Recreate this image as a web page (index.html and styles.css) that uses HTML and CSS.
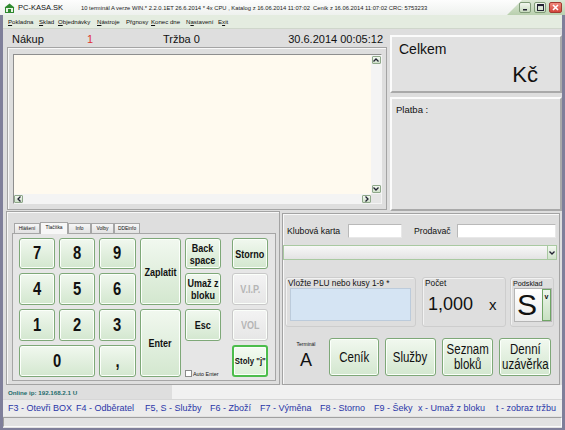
FILE: index.html
```html
<!DOCTYPE html>
<html lang="cs">
<head>
<meta charset="utf-8">
<title>PC-KASA.SK</title>
<link rel="stylesheet" href="styles.css">
</head>
<body>
<div class="window">
  <div class="titlebar">
    <svg class="appicon" width="11" height="10" viewBox="0 0 11 10"><path d="M0.5 4.5 L5.5 0.5 L10.5 4.5 Z" fill="#2f8a2f"/><rect x="1.5" y="4.5" width="8" height="5" fill="#e8f4e4" stroke="#2f8a2f"/><rect x="4" y="6" width="3" height="3.5" fill="#2f8a2f"/></svg>
    <span class="apptitle">PC-KASA.SK</span>
    <span class="titleinfo">10 terminál A verze WIN.* 2.2.0.1ET 26.6.2014 * 4x CPU , Katalog z 16.06.2014 11:07:02&nbsp; Ceník z 16.06.2014 11:07:02 CRC: 5753233</span>
    <div class="tcaps">
      <span class="tcap"><svg width="6" height="6" viewBox="0 0 6 6"><rect x="1" y="4" width="4" height="1.5" fill="#223"/></svg></span>
      <span class="tcap"><svg width="7" height="7" viewBox="0 0 7 7"><rect x="0.5" y="0.5" width="6" height="6" fill="none" stroke="#223"/><rect x="0.5" y="0.5" width="6" height="1.6" fill="#223"/></svg></span>
      <span class="tcap close"><svg width="7" height="7" viewBox="0 0 7 7"><path d="M1 1 L6 6 M6 1 L1 6" stroke="#fff" stroke-width="1.6"/></svg></span>
    </div>
  </div>
  <div class="client">
    <div class="menubar">
      <span class="mi w1"><u>P</u>okladna</span>
      <span class="mi w2"><u>S</u>klad</span>
      <span class="mi w3"><u>O</u>bjednávky</span>
      <span class="mi w4"><u>N</u>ástroje</span>
      <span class="mi w5">Přgnosy</span>
      <span class="mi w6"><u>K</u>onec dne</span>
      <span class="mi w7">N<u>a</u>stavení</span>
      <span class="mi w8">E<u>x</u>it</span>
    </div>

    <div class="top">
      <div class="lefttop">
        <div class="infoline">
          <span class="c1">Nákup</span>
          <span class="c2">1</span>
          <span class="c3">Tržba 0</span>
          <span class="c4">30.6.2014 00:05:12</span>
        </div>
        <div class="listbox">
          <div class="listinner">
            <div class="listrow">
              <div class="listarea"></div>
              <div class="vscroll">
                <span class="sbtn"><svg width="6" height="4" viewBox="0 0 6 4"><path d="M0.5 3.5 L3 1 L5.5 3.5" fill="none" stroke="#223" stroke-width="1.3"/></svg></span>
                <span class="vtrack"></span>
                <span class="sbtn"><svg width="6" height="4" viewBox="0 0 6 4"><path d="M0.5 0.5 L3 3 L5.5 0.5" fill="none" stroke="#223" stroke-width="1.3"/></svg></span>
              </div>
            </div>
            <div class="hscroll">
              <span class="sbtn"><svg width="4" height="6" viewBox="0 0 4 6"><path d="M3.5 0.5 L1 3 L3.5 5.5" fill="none" stroke="#223" stroke-width="1.3"/></svg></span>
              <span class="htrack"></span>
              <span class="sbtn"><svg width="4" height="6" viewBox="0 0 4 6"><path d="M0.5 0.5 L3 3 L0.5 5.5" fill="none" stroke="#223" stroke-width="1.3"/></svg></span>
              <span class="corner"></span>
            </div>
          </div>
        </div>
      </div>
      <div class="righttop">
        <div class="celkem">
          <div class="celkem-lbl">Celkem</div>
          <div class="celkem-val">Kč</div>
        </div>
        <div class="platba">Platba :</div>
      </div>
    </div>

    <div class="bottom">
      <div class="keypanel">
        <div class="tabs">
          <span class="tab t1">Hlášení</span>
          <span class="tab t2 active">Tlačítka</span>
          <span class="tab t3">Info</span>
          <span class="tab t4">Volby</span>
          <span class="tab t5">DDEinfo</span>
        </div>
        <div class="tabpane">
          <div class="keys">
            <div class="btn dg"><span class="nar">7</span></div>
            <div class="btn dg"><span class="nar">8</span></div>
            <div class="btn dg"><span class="nar">9</span></div>
            <div class="btn lb tall"><span class="nar">Zaplatit</span></div>
            <div class="btn lb"><span class="nar">Back<br>space</span></div>
            <div class="btn lb side"><span class="nar">Storno</span></div>

            <div class="btn dg"><span class="nar">4</span></div>
            <div class="btn dg"><span class="nar">5</span></div>
            <div class="btn dg"><span class="nar">6</span></div>
            <div class="btn lb"><span class="nar">Umaž z<br>bloku</span></div>
            <div class="btn lb side off"><span class="nar">V.I.P.</span></div>

            <div class="btn dg"><span class="nar">1</span></div>
            <div class="btn dg"><span class="nar">2</span></div>
            <div class="btn dg"><span class="nar">3</span></div>
            <div class="btn lb tall"><span class="nar">Enter</span></div>
            <div class="btn lb"><span class="nar">Esc</span></div>
            <div class="btn lb side off"><span class="nar">VOL</span></div>

            <div class="btn dg wide"><span class="nar">0</span></div>
            <div class="btn dg"><span class="nar">,</span></div>
            <div class="auto"><span class="chk"></span><span>Auto Enter</span></div>
            <div class="btn lb side stoly"><span class="nar">Stoly "j"</span></div>
          </div>
        </div>
      </div>

      <div class="entry">
        <div class="row1">
          <span class="lbl klub">Klubová karta</span><span class="inp inp1"></span>
          <span class="lbl prod">Prodavač</span><span class="inp inp2"></span>
        </div>
        <div class="combo">
          <span class="combo-field"></span>
          <span class="combo-btn"><svg width="6" height="4" viewBox="0 0 6 4"><path d="M0.5 0.5 L3 3 L5.5 0.5" fill="none" stroke="#223" stroke-width="1.3"/></svg></span>
        </div>
        <div class="groups">
          <div class="grp g-plu">
            <div class="grp-lbl">Vložte PLU nebo kusy 1-9 *</div>
            <div class="plu-input"></div>
          </div>
          <div class="grp g-pocet">
            <div class="grp-lbl">Počet</div>
            <div class="pocet"><span class="pocet-num">1,000</span><span class="pocet-x">x</span></div>
          </div>
          <div class="grp g-pod">
            <div class="grp-lbl">Podsklad</div>
            <div class="sel"><span class="sel-s">S</span><span class="sel-btn">v</span></div>
          </div>
        </div>
        <div class="actions">
          <div class="term"><span class="term-lbl">Terminál</span><span class="term-val">A</span></div>
          <div class="btn act a1"><span class="nar">Ceník</span></div>
          <div class="btn act a2"><span class="nar">Služby</span></div>
          <div class="btn act a3"><span class="nar">Seznam<br>bloků</span></div>
          <div class="btn act a4"><span class="nar">Denní<br>uzávěrka</span></div>
        </div>
      </div>
    </div>

    <div class="online"><span>Online ip: 192.168.2.1 U</span></div>
    <div class="fkeys">
      <span class="fk k1">F3 - Otevři BOX</span>
      <span class="fk k2">F4 - Odběratel</span>
      <span class="fk k3">F5, S - Služby</span>
      <span class="fk k4">F6 - Zboží</span>
      <span class="fk k5">F7 - Výměna</span>
      <span class="fk k6">F8 - Storno</span>
      <span class="fk k7">F9 - Šeky</span>
      <span class="fk k8">x - Umaž z bloku</span>
      <span class="fk k9">t - zobraz tržbu</span>
    </div>
    <div class="statusbar"><div class="statusinner"></div></div>
  </div>
</div>
</body>
</html>
```

FILE: styles.css
```css
* { box-sizing: border-box; }
body {
  margin: 0;
  background: #ffffff;
  font-family: "Liberation Sans", Arial, sans-serif;
  color: #111;
}
.window {
  width: 565px;
  height: 430px;
  display: flex;
  flex-direction: column;
  overflow: hidden;
  background: #dedede;
}

/* title bar */
.titlebar {
  height: 15px;
  flex: none;
  display: flex;
  align-items: center;
  background: linear-gradient(#fdfdfd, #eef1ee);
  white-space: nowrap;
}
.appicon { margin-left: 4px; flex: none; }
.apptitle {
  font-size: 7.5px;
  margin-left: 3px;
  width: 63px;
  flex: none;
  color: #111;
}
.titleinfo {
  font-size: 5.8px;
  color: #222;
  flex: none;
}
.tcaps {
  margin-left: auto;
  width: 58px;
  height: 15px;
  flex: none;
  display: flex;
  justify-content: flex-end;
  align-items: center;
  gap: 3px;
  padding-right: 3px;
  background: linear-gradient(#dbe8d5, #b9d0ae);
  clip-path: polygon(15px 0, 100% 0, 100% 100%, 0 100%);
}
.tcap {
  width: 12px;
  height: 11px;
  border: 1px solid #7f9a77;
  border-radius: 2px;
  background: linear-gradient(#f2f7ef, #c9dcc0);
  display: flex;
  align-items: center;
  justify-content: center;
}
.tcap.close {
  width: 13px;
  border-color: #a23a30;
  background: linear-gradient(#f08a7c, #d2443a);
}

/* client */
.client {
  flex: 1;
  display: flex;
  flex-direction: column;
  border-left: 3px solid #7f7f9a;
  border-right: 3px solid #7f7f9a;
  border-bottom: 2px solid #7f7f9a;
  background: #dedede;
}
.menubar {
  height: 14px;
  flex: none;
  display: flex;
  align-items: center;
  padding-left: 5px;
  background: #e4ece0;
  border-bottom: 1px solid #cfd6cb;
  font-size: 6.1px;
  white-space: nowrap;
}
.mi { flex: none; }
.mi u { text-decoration: underline; }
.w1 { width: 31px; }
.w2 { width: 19px; }
.w3 { width: 39px; }
.w4 { width: 29px; }
.w5 { width: 25px; }
.w6 { width: 35px; }
.w7 { width: 32px; }
.w8 { width: 12px; }

/* top area */
.top {
  height: 182px;
  flex: none;
  display: flex;
}
.lefttop {
  margin-left: 4px;
  width: 380px;
  display: flex;
  flex-direction: column;
}
.infoline {
  height: 18px;
  display: flex;
  align-items: center;
  padding: 2px 4px 0 5px;
  font-size: 11px;
  white-space: nowrap;
}
.c1 { width: 75px; }
.c2 { width: 76px; color: #e03232; }
.c3 { flex: 1; }
.listbox {
  height: 163px;
  border: 1px solid #a4a4a4;
  box-shadow: inset 1px 1px 0 #f8f8f8;
  padding: 6px 4px 5px 5px;
  display: flex;
}
.listinner {
  flex: 1;
  display: flex;
  flex-direction: column;
  border: 1px solid;
  border-color: #8e8e8e #f4f4f4 #f4f4f4 #8e8e8e;
  background: #f3f3f3;
}
.listrow {
  flex: 1;
  display: flex;
}
.listarea {
  flex: 1;
  background: #fffaef;
}
.vscroll {
  width: 10px;
  display: flex;
  flex-direction: column;
  align-items: center;
  padding: 1px 0;
  background: #f4f4f4;
}
.vtrack { flex: 1; }
.hscroll {
  height: 9px;
  display: flex;
  align-items: center;
  background: #f4f4f4;
}
.htrack { flex: 1; }
.corner {
  width: 10px;
  height: 9px;
  background: #e6e6e6;
}
.sbtn {
  width: 9px;
  height: 8px;
  flex: none;
  border: 1px solid #8fa88a;
  border-radius: 1px;
  background: linear-gradient(#f3f8f1, #cfe0ca);
  display: flex;
  align-items: center;
  justify-content: center;
}
.righttop {
  margin-left: 3px;
  width: 172px;
  display: flex;
  flex-direction: column;
  padding-top: 6px;
  gap: 4px;
}
.celkem {
  height: 58px;
  border: 2px solid;
  border-color: #fbfbfb #a9a9a9 #a9a9a9 #fbfbfb;
  background: #e1e1e1;
  padding: 4px 22px 0 7px;
}
.celkem-lbl { font-size: 14px; line-height: 16px; }
.celkem-val { font-size: 22px; line-height: 26px; text-align: right; margin-top: 5px; }
.platba {
  flex: 1;
  border: 2px solid;
  border-color: #fbfbfb #a9a9a9 #a9a9a9 #fbfbfb;
  background: #e1e1e1;
  padding: 5px 4px;
  font-size: 9.5px;
}

/* bottom area */
.bottom {
  height: 174px;
  flex: none;
  display: flex;
}
.keypanel {
  margin-left: 3px;
  width: 274px;
  border: 1px solid #a3a3a3;
  box-shadow: inset 1px 1px 0 #f8f8f8;
  padding: 10px 3px 3px 5px;
  display: flex;
  flex-direction: column;
}
.tabs {
  height: 11px;
  display: flex;
  align-items: flex-end;
  padding-left: 2px;
  position: relative;
  z-index: 1;
}
.tab {
  height: 10px;
  border: 1px solid #a6a6a6;
  border-bottom: none;
  background: linear-gradient(#f6f6f6, #e2e2e2);
  font-size: 4.9px;
  display: flex;
  align-items: center;
  justify-content: center;
  white-space: nowrap;
  flex: none;
  overflow: hidden;
}
.tab.active {
  height: 12px;
  margin-bottom: -1px;
  background: #f7f7f7;
  padding-bottom: 2px;
}
.t1 { width: 26px; }
.t2 { width: 28px; }
.t3 { width: 23px; }
.t4 { width: 23px; }
.t5 { width: 26px; }
.tabpane {
  flex: 1;
  border: 1px solid #a6a6a6;
  background: #e6e6e6;
  padding: 4px 0 0 6px;
}
.keys {
  display: grid;
  grid-template-columns: 36px 36px 37px 41px 36px 43px;
  grid-template-rows: 31px 32px 32px 32px;
  column-gap: 4px;
  row-gap: 4px;
}
.btn {
  border: 1px solid #7ea878;
  border-radius: 3px;
  background: linear-gradient(#f1f8ef, #d3e7cf);
  box-shadow: inset 0 0 0 1px #fbfffa;
  display: flex;
  align-items: center;
  justify-content: center;
  text-align: center;
  color: #111;
  white-space: nowrap;
}
.nar {
  display: inline-block;
  transform: scaleX(0.82);
  flex: none;
}
.dg {
  font-weight: bold;
  font-size: 18px;
}
.lb {
  font-weight: bold;
  font-size: 11px;
  line-height: 12px;
}
.tall { grid-row: span 2; }
.wide { grid-column: span 2; }
.side {
  grid-column: 6;
  width: 36px;
  justify-self: end;
}
.off {
  border-color: #c9c9c9;
  background: linear-gradient(#f3f3f3, #e6e6e6);
  color: #b5b5b5;
}
.stoly {
  border: 2px solid #4cbd4c;
  background: linear-gradient(#f4fbf2, #dcefd8);
  font-size: 9.8px;
}
.stoly .nar { transform: scaleX(0.8); }
.auto {
  grid-column: 5;
  align-self: end;
  display: flex;
  align-items: center;
  gap: 1px;
  font-size: 5.4px;
  white-space: nowrap;
}
.chk {
  width: 7px;
  height: 7px;
  border: 1px solid #8a8a8a;
  background: #fff;
  flex: none;
}

/* entry panel */
.entry {
  margin-left: 2px;
  margin-top: 2px;
  width: 278px;
  border: 1px solid #a3a3a3;
  box-shadow: inset 1px 1px 0 #f8f8f8;
  display: flex;
  flex-direction: column;
}
.row1 {
  margin-top: 10px;
  height: 14px;
  display: flex;
  align-items: center;
  font-size: 8.7px;
  white-space: nowrap;
}
.lbl { flex: none; }
.klub { margin-left: 4px; width: 61px; }
.prod { margin-left: 12px; width: 43px; }
.inp {
  height: 14px;
  background: #fff;
  border: 1px solid;
  border-color: #b9b9b9 #e8e8e8 #e8e8e8 #b9b9b9;
  flex: none;
}
.inp1 { width: 54px; }
.inp2 { width: 99px; }
.combo {
  margin-top: 7px;
  width: 274px;
  height: 15px;
  display: flex;
  border: 1px solid #a9c9a1;
  background: linear-gradient(#f8f8f8, #e3e3e3);
}
.combo-field { flex: 1; }
.combo-btn {
  width: 9px;
  border-left: 1px solid #a9c9a1;
  background: linear-gradient(#f3f8f1, #d0e2cb);
  display: flex;
  align-items: center;
  justify-content: center;
}
.groups {
  margin-top: 17px;
  height: 50px;
  display: flex;
  padding-left: 2px;
}
.grp {
  border: 1px solid #cdcdcd;
  border-radius: 3px;
  box-shadow: inset 1px 1px 0 #f2f2f2;
  display: flex;
  flex-direction: column;
}
.grp-lbl {
  font-size: 8.3px;
  line-height: 9px;
  padding: 1px 0 0 2px;
  white-space: nowrap;
}
.g-plu { width: 131px; }
.g-pocet { width: 84px; margin-left: 6px; }
.g-pod { width: 44px; margin-left: 4px; }
.g-pod .grp-lbl { font-size: 7.2px; padding-left: 2px; }
.plu-input {
  margin: 0 0 0 4px;
  width: 121px;
  height: 33px;
  background: #d5e4f3;
  border: 1px solid #bccbdb;
}
.pocet {
  flex: 1;
  display: flex;
  align-items: center;
  padding: 0 0 6px 5px;
}
.pocet-num { font-size: 18px; width: 61px; }
.pocet-x { font-size: 15px; }
.sel {
  margin: 0 0 0 3px;
  width: 38px;
  height: 34px;
  display: flex;
  border: 1px solid #b5b5b5;
  background: linear-gradient(#ffffff, #ececec);
}
.sel-s {
  flex: 1;
  font-size: 30px;
  line-height: 32px;
  padding-left: 2px;
}
.sel-btn {
  width: 9px;
  border: 1px solid #6fa565;
  background: linear-gradient(#eef6ec, #c8e0c2);
  font-size: 7px;
  font-weight: bold;
  display: flex;
  justify-content: center;
  padding-top: 3px;
}
.actions {
  margin-top: 11px;
  height: 38px;
  display: flex;
}
.term {
  width: 46px;
  display: flex;
  flex-direction: column;
  align-items: center;
  padding-top: 3px;
}
.term-lbl { font-size: 5px; line-height: 7px; }
.term-val { font-size: 18px; line-height: 22px; margin-top: 1px; }
.act {
  font-size: 14px;
  line-height: 15px;
  flex: none;
}
.a1 { width: 50px; }
.a2 { width: 51px; margin-left: 6px; }
.a3 { width: 51px; margin-left: 6px; }
.a4 { width: 52px; margin-left: 6px; }

/* footer */
.online {
  height: 14px;
  flex: none;
  display: flex;
  align-items: center;
  padding-left: 5px;
  background: linear-gradient(to right, #dedede 0, #dedede 169px, #f1f1f1 169px);
  font-size: 6.2px;
  font-weight: bold;
  color: #1d6b6b;
}
.fkeys {
  height: 17px;
  flex: none;
  display: flex;
  align-items: center;
  padding-left: 5px;
  background: #ececec;
  border-top: 1px solid #d6d6d6;
  color: #2a36a8;
  font-size: 9px;
  white-space: nowrap;
}
.fk { flex: none; }
.k1 { width: 68px; }
.k2 { width: 69px; }
.k3 { width: 65px; }
.k4 { width: 50px; }
.k5 { width: 60px; }
.k6 { width: 54px; }
.k7 { width: 44px; }
.k8 { width: 78px; }
.k9 { width: 60px; }
.statusbar {
  height: 12px;
  flex: none;
  padding: 1px 0;
  background: #e2e2e2;
}
.statusinner {
  height: 100%;
  border: 1px solid;
  border-color: #a0a0a0 #fafafa #fafafa #a0a0a0;
}
```
